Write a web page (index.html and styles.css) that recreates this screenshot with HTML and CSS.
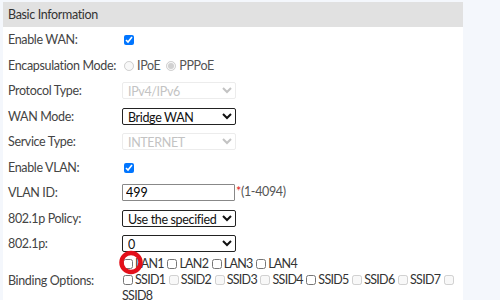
FILE: index.html
```html
<!DOCTYPE html>
<html lang="en">
  <head>
    <meta charset="UTF-8" />
    <title>WAN Configuration</title>
    <link rel="stylesheet" href="styles.css">
  </head>
  <body>
    <div id="panel">
      <div class="title">Basic Information</div>

      <table class="form">
        <colgroup>
          <col class="c-label">
          <col>
        </colgroup>
        <tr>
          <td class="label">Enable WAN:</td>
          <td><input type="checkbox" class="cb" checked></td>
        </tr>
        <tr>
          <td class="label">Encapsulation Mode:</td>
          <td class="dim">
            <label class="opt"><input type="radio" name="encap" class="rd" disabled>IPoE</label>
            <label class="opt"><input type="radio" name="encap" class="rd" checked disabled>PPPoE</label>
          </td>
        </tr>
        <tr>
          <td class="label">Protocol Type:</td>
          <td>
            <select class="sel" disabled>
              <option>IPv4/IPv6</option>
            </select>
          </td>
        </tr>
        <tr>
          <td class="label">WAN Mode:</td>
          <td>
            <select class="sel">
              <option>Bridge WAN</option>
              <option>Route WAN</option>
            </select>
          </td>
        </tr>
        <tr>
          <td class="label">Service Type:</td>
          <td>
            <select class="sel" disabled>
              <option>INTERNET</option>
            </select>
          </td>
        </tr>
        <tr>
          <td class="label">Enable VLAN:</td>
          <td><input type="checkbox" class="cb" checked></td>
        </tr>
        <tr>
          <td class="label">VLAN ID:</td>
          <td>
            <input type="text" class="txt" value="499"><span class="req">*</span><span class="hint">(1-4094)</span>
          </td>
        </tr>
        <tr>
          <td class="label">802.1p Policy:</td>
          <td>
            <select class="sel">
              <option>Use the specified value</option>
            </select>
          </td>
        </tr>
        <tr>
          <td class="label">802.1p:</td>
          <td>
            <select class="sel">
              <option>0</option>
            </select>
          </td>
        </tr>
        <tr class="bind">
          <td class="label">Binding Options:</td>
          <td>
            <div class="binds">
              <label class="opt"><input type="checkbox" class="cb">LAN1</label>
              <label class="opt"><input type="checkbox" class="cb">LAN2</label>
              <label class="opt"><input type="checkbox" class="cb">LAN3</label>
              <label class="opt"><input type="checkbox" class="cb">LAN4</label>
              <br>
              <label class="opt"><input type="checkbox" class="cb">SSID1</label>
              <label class="opt"><input type="checkbox" class="cb" disabled>SSID2</label>
              <label class="opt"><input type="checkbox" class="cb" disabled>SSID3</label>
              <label class="opt"><input type="checkbox" class="cb" disabled>SSID4</label>
              <label class="opt"><input type="checkbox" class="cb">SSID5</label>
              <label class="opt"><input type="checkbox" class="cb" disabled>SSID6</label>
              <label class="opt"><input type="checkbox" class="cb" disabled>SSID7</label>
              <label class="opt"><input type="checkbox" class="cb" disabled>SSID8</label>
            </div>
          </td>
        </tr>
      </table>

      <!-- red mark drawn over the first LAN box -->
      <svg class="mark" width="30" height="30" viewBox="0 0 30 30">
        <ellipse cx="15" cy="14.5" rx="9.5" ry="9.5" fill="none" stroke="#e3101a" stroke-width="4.5"/>
      </svg>
    </div>
  </body>
</html>
```

FILE: styles.css
```css
body {
  margin: 0;
  background: #f4f7fc;
  font-family: Lato, "Liberation Sans", sans-serif;
  font-size: 12.5px;
  letter-spacing: -0.35px;
  color: #333;
}
#panel {
  position: relative;
  margin: 2px 0 0 3px;
  width: 460px;
  height: 298px;
  background: #fff;
  overflow: hidden;
}
.title {
  height: 25px;
  line-height: 25px;
  padding-left: 5px;
  background: #e1e1e1;
}
.form {
  border-collapse: collapse;
  table-layout: fixed;
  width: 100%;
}
.c-label {
  width: 119px;
}
.form td {
  padding: 0;
  height: 25.5px;
  vertical-align: middle;
}
.form td.label {
  padding-left: 5px;
  color: #444;
  white-space: nowrap;
}
.cb {
  width: 10px;
  height: 10px;
  margin: 0 3px 0 2px;
  vertical-align: -1px;
}
.rd {
  width: 10px;
  height: 10px;
  margin: 0 3px 0 2px;
  vertical-align: -1px;
}
.opt {
  margin-right: 1px;
}
.dim {
  color: #555;
}
.sel {
  width: 114px;
  height: 17px;
  padding: 0 1px;
  font-family: inherit;
  font-size: 12.5px;
  letter-spacing: -0.35px;
  line-height: 15px;
  color: #111;
  border: 1px solid #222;
  border-radius: 2px;
  background: #fff;
  vertical-align: middle;
}
.sel:disabled {
  color: #aaa;
  border-color: #e4e4e4;
  background: #fff;
}
.txt {
  width: 113px;
  height: 17px;
  box-sizing: border-box;
  padding: 0 3px;
  font-family: inherit;
  font-size: 12.5px;
  border: 1px solid #888;
  border-radius: 1px;
  vertical-align: middle;
}
.req {
  color: #e02020;
  margin-left: 1px;
}
.hint {
  color: #555;
}
.binds {
  line-height: 16px;
  margin-top: -2px;
  letter-spacing: -0.7px;
  word-spacing: 0;
}
.binds .cb {
  margin: 0 2px 0 1px;
}
.binds .opt {
  margin-right: 0;
}
.bind td {
  height: 48px;
}
.mark {
  position: absolute;
  left: 113px;
  top: 246px;
}
```
